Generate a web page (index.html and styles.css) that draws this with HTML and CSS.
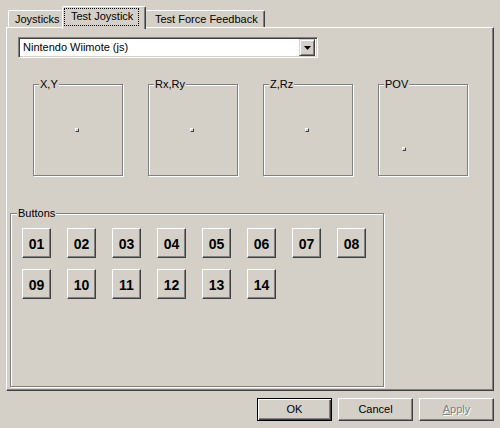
FILE: index.html
```html
<!DOCTYPE html>
<html>
<head>
<meta charset="utf-8">
<link rel="stylesheet" href="styles.css">
</head>
<body>
<div class="window">
  <div class="tabstrip">
    <div class="tab tab-joy">Joysticks</div>
    <div class="tab tab-active"><span class="focus">Test Joystick</span></div>
    <div class="tab tab-ff">Test Force Feedback</div>
  </div>
  <div class="panel">
    <div class="combo">
      <div class="combo-text">Nintendo Wiimote (js)</div>
      <div class="combo-btn"><svg width="7" height="4" viewBox="0 0 7 4"><path d="M0 0H7L3.5 4Z" fill="#000"/></svg></div>
    </div>
    <div class="axes">
      <div class="axis"><span class="legend">X,Y</span><i class="dot dot-center"></i></div>
      <div class="axis"><span class="legend">Rx,Ry</span><i class="dot dot-center"></i></div>
      <div class="axis"><span class="legend">Z,Rz</span><i class="dot dot-center"></i></div>
      <div class="axis"><span class="legend">POV</span><i class="dot dot-pov"></i></div>
    </div>
    <div class="group">
      <span class="legend legend-group">Buttons</span>
      <div class="btn-grid">
        <div class="jbtn">01</div><div class="jbtn">02</div><div class="jbtn">03</div><div class="jbtn">04</div>
        <div class="jbtn">05</div><div class="jbtn">06</div><div class="jbtn">07</div><div class="jbtn">08</div>
        <div class="jbtn">09</div><div class="jbtn">10</div><div class="jbtn">11</div><div class="jbtn">12</div>
        <div class="jbtn">13</div><div class="jbtn">14</div>
      </div>
    </div>
  </div>
  <div class="actions">
    <div class="pbtn pbtn-default"><span>OK</span></div>
    <div class="pbtn"><span>Cancel</span></div>
    <div class="pbtn pbtn-disabled"><span><u>A</u>pply</span></div>
  </div>
</div>
</body>
</html>
```
FILE: styles.css
```css
html, body {
  margin: 0;
  padding: 0;
  background: #d4d0c8;
}
body {
  font-family: "Liberation Sans", Arial, sans-serif;
  font-size: 11px;
  color: #000;
  width: 500px;
  height: 428px;
  overflow: hidden;
}
.window {
  width: 500px;
  height: 428px;
}
.tabstrip {
  display: flex;
  align-items: flex-end;
  height: 21px;
  margin: 6px 0 0 8px;
  position: relative;
  z-index: 2;
}
.tab {
  box-sizing: border-box;
  height: 17px;
  background: #d4d0c8;
  border-top: 1px solid #fff;
  border-left: 1px solid #fff;
  border-right: 1px solid #404040;
  box-shadow: inset -1px 0 0 #808080;
  border-radius: 2px 2px 0 0;
  padding: 2px 0 0 6px;
  line-height: 13px;
  white-space: nowrap;
}
.tab-joy {
  width: 56px;
}
.tab-active {
  width: 84px;
  height: 23px;
  margin: 0 -2px -2px -2px;
  padding: 2px 0 0 2px;
  position: relative;
  z-index: 1;
}
.focus {
  display: inline-block;
  outline: 1px dotted #000;
  outline-offset: 0;
  padding: 1px 5px 2px 6px;
  line-height: 13px;
}
.tab-ff {
  width: 121px;
  padding-left: 10px;
}
.panel {
  box-sizing: border-box;
  margin-left: 6px;
  width: 488px;
  height: 364px;
  border-top: 1px solid #fff;
  border-left: 1px solid #fff;
  border-right: 1px solid #404040;
  border-bottom: 1px solid #404040;
  box-shadow: inset -1px -1px 0 #808080;
  position: relative;
  display: flex;
  flex-direction: column;
  align-items: flex-start;
}
.combo {
  box-sizing: border-box;
  margin: 9px 0 0 11px;
  width: 300px;
  height: 21px;
  background: #fff;
  border-top: 1px solid #808080;
  border-left: 1px solid #808080;
  border-right: 1px solid #fff;
  border-bottom: 1px solid #fff;
  box-shadow: inset 1px 1px 0 #404040, inset -1px -1px 0 #d4d0c8;
  display: flex;
  align-items: center;
  padding: 2px;
}
.combo-text {
  flex: 1;
  padding-left: 2px;
  line-height: 15px;
}
.combo-btn {
  box-sizing: border-box;
  width: 16px;
  height: 17px;
  background: #d4d0c8;
  border-top: 1px solid #d4d0c8;
  border-left: 1px solid #d4d0c8;
  border-right: 1px solid #404040;
  border-bottom: 1px solid #404040;
  box-shadow: inset 1px 1px 0 #fff, inset -1px -1px 0 #808080;
  display: flex;
  align-items: center;
  justify-content: center;
}
.combo-btn svg {
  display: block;
}
.axes {
  display: flex;
  gap: 25px;
  margin: 26px 0 0 26px;
}
.axis {
  box-sizing: border-box;
  width: 90px;
  height: 92px;
  border: 1px solid #808080;
  box-shadow: inset 1px 1px 0 #fff, 1px 1px 0 #fff;
  position: relative;
}
.legend {
  position: absolute;
  top: -7px;
  left: 5px;
  background: #d4d0c8;
  padding: 0 1px;
  line-height: 13px;
}
.dot {
  position: absolute;
  box-sizing: border-box;
  width: 4px;
  height: 4px;
  background: #d4d0c8;
  border-top: 1px solid #fff;
  border-left: 1px solid #fff;
  border-right: 1px solid #404040;
  border-bottom: 1px solid #404040;
}
.dot-center {
  left: 41px;
  top: 43px;
}
.dot-pov {
  left: 23px;
  top: 62px;
}
.group {
  box-sizing: border-box;
  margin: 37px 0 0 3px;
  width: 374px;
  height: 174px;
  border: 1px solid #808080;
  box-shadow: inset 1px 1px 0 #fff, 1px 1px 0 #fff;
  position: relative;
}
.legend-group {
  left: 6px;
}
.btn-grid {
  display: grid;
  grid-template-columns: repeat(8, 29px);
  grid-auto-rows: 30px;
  column-gap: 16px;
  row-gap: 11px;
  padding: 14px 0 0 11px;
}
.jbtn {
  box-sizing: border-box;
  border-top: 1px solid #fff;
  border-left: 1px solid #fff;
  border-right: 1px solid #404040;
  border-bottom: 1px solid #404040;
  box-shadow: inset -1px -1px 0 #808080;
  display: flex;
  align-items: center;
  justify-content: center;
  font-weight: bold;
  font-size: 14px;
  padding-top: 1px;
}
.actions {
  display: flex;
  justify-content: flex-end;
  gap: 6px;
  margin: 7px 6px 0 0;
}
.pbtn {
  box-sizing: border-box;
  width: 75px;
  height: 23px;
  border-top: 1px solid #fff;
  border-left: 1px solid #fff;
  border-right: 1px solid #404040;
  border-bottom: 1px solid #404040;
  box-shadow: inset -1px -1px 0 #808080;
  display: flex;
  align-items: center;
  justify-content: center;
  line-height: 13px;
}
.pbtn-default {
  border: 1px solid #000;
  box-shadow: inset 1px 1px 0 #fff, inset -1px -1px 0 #404040, inset -2px -2px 0 #808080;
}
.pbtn-disabled {
  color: #808080;
  text-shadow: 1px 1px 0 #fff;
}
.pbtn-disabled u {
  text-decoration: underline;
}
```
